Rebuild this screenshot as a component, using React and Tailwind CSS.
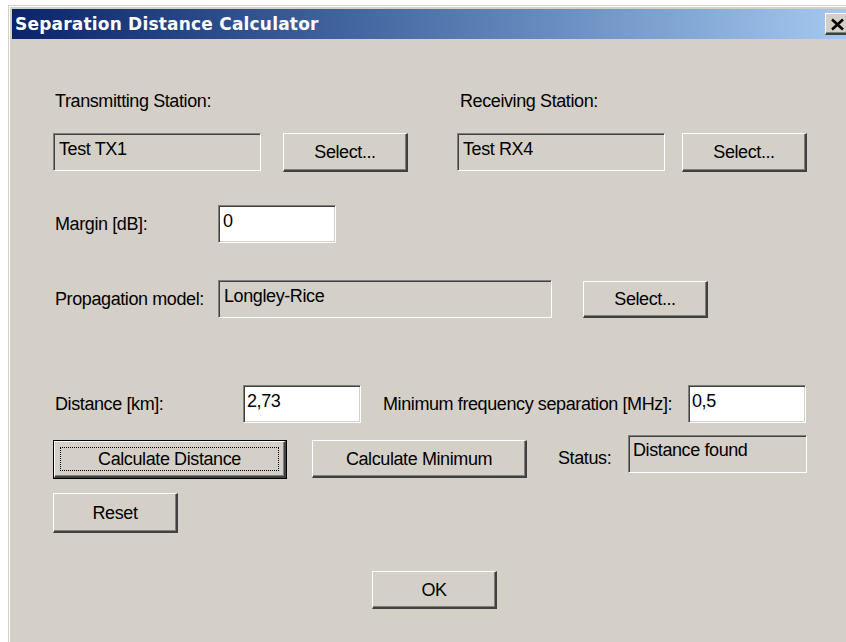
import React from "react";

const raisedCls =
  "flex items-center justify-center bg-[#d4d0c8] border-t border-l border-b-2 border-r-2 border-t-white border-l-white border-b-[#404040] border-r-[#404040] shadow-[inset_-1px_-1px_0_#808080]";

const greyFieldCls =
  "bg-[#d4d0c8] border border-t-[#808080] border-l-[#808080] border-b-white border-r-white shadow-[inset_1px_1px_0_#404040] whitespace-nowrap";

const whiteFieldCls =
  "bg-white border border-t-[#808080] border-l-[#808080] border-b-white border-r-white shadow-[inset_1px_1px_0_#404040,inset_-1px_-1px_0_#d4d0c8] whitespace-nowrap";

function Button({ className, children }) {
  return <div className={`${raisedCls} ${className}`}>{children}</div>;
}

function CloseGlyph() {
  return (
    <svg width="15" height="13" viewBox="0 0 15 13">
      <path d="M2 1.5 L13 11.5 M13 1.5 L2 11.5" stroke="#000" strokeWidth="2.6" fill="none" />
    </svg>
  );
}

export default function App() {
  return (
    <div className="w-[846px] h-[642px] overflow-hidden bg-white pt-[5px] pl-[8px] font-['Liberation_Sans',Arial,sans-serif] text-[18px] tracking-[-0.4px] leading-[20px] text-black">
      <div className="w-[847px] h-[700px] border-t border-l border-t-[#d4d0c8] border-l-[#d4d0c8]">
        <div className="h-full border-t border-l border-t-white border-l-white bg-[#d4d0c8] p-[2px]">
          {/* caption bar */}
          <div className="h-[30px] flex items-center justify-between bg-gradient-to-r from-[#0a246a] to-[#a6caf0] pl-[3px] pr-[2px]">
            <span className="font-['DejaVu_Sans',Verdana,sans-serif] font-bold text-[17px] text-white tracking-[0.2px]">
              Separation Distance Calculator
            </span>
            <Button className="w-[26px] h-[22px] pt-[1px]">
              <CloseGlyph />
            </Button>
          </div>

          {/* dialog body */}
          <div className="pl-[41px]">
            <div className="flex mt-[52px]">
              <div className="w-[404px] pl-[2px]">Transmitting Station:</div>
              <div className="pl-[3px]">Receiving Station:</div>
            </div>

            <div className="flex items-start mt-[22px]">
              <div className={`${greyFieldCls} w-[208px] h-[38px] pl-[5px] pt-[5px]`}>Test TX1</div>
              <Button className="ml-[22px] w-[125px] h-[39px]">Select...</Button>
              <div className={`${greyFieldCls} ml-[49px] w-[208px] h-[38px] pl-[5px] pt-[5px]`}>Test RX4</div>
              <Button className="ml-[17px] w-[125px] h-[39px]">Select...</Button>
            </div>

            <div className="flex items-center mt-[33px]">
              <div className="w-[165px] pl-[2px]">Margin [dB]:</div>
              <div className={`${whiteFieldCls} w-[118px] h-[38px] pl-[4px] pt-[5px]`}>0</div>
            </div>

            <div className="flex items-center mt-[37px]">
              <div className="w-[165px] pl-[2px]">Propagation model:</div>
              <div className={`${greyFieldCls} w-[334px] h-[38px] pl-[5px] pt-[5px]`}>Longley-Rice</div>
              <Button className="ml-[31px] w-[125px] h-[37px]">Select...</Button>
            </div>

            <div className="flex items-center mt-[67px]">
              <div className="w-[190px] pl-[2px]">Distance [km]:</div>
              <div className={`${whiteFieldCls} w-[118px] h-[38px] pl-[3px] pt-[5px]`}>2,73</div>
              <div className="ml-[22px] w-[305px] whitespace-nowrap">Minimum frequency separation [MHz]:</div>
              <div className={`${whiteFieldCls} w-[118px] h-[38px] pl-[3px] pt-[5px]`}>0,5</div>
            </div>

            <div className="flex items-start mt-[12px]">
              <div className="mt-[5px] w-[234px] h-[39px] border border-black">
                <div className={`${raisedCls} h-full p-[5px]`}>
                  <div className="w-full h-full border border-dotted border-black flex items-center justify-center">
                    Calculate Distance
                  </div>
                </div>
              </div>
              <Button className="ml-[25px] mt-[5px] w-[215px] h-[38px]">Calculate Minimum</Button>
              <div className="ml-[31px] mt-[13px] w-[70px]">Status:</div>
              <div className={`${greyFieldCls} w-[179px] h-[38px] pl-[4px] pt-[4px]`}>Distance found</div>
            </div>

            <div className="flex mt-[14px]">
              <Button className="w-[125px] h-[40px]">Reset</Button>
            </div>

            <div className="flex mt-[38px]">
              <Button className="ml-[319px] w-[125px] h-[38px]">OK</Button>
            </div>
          </div>
        </div>
      </div>
    </div>
  );
}
